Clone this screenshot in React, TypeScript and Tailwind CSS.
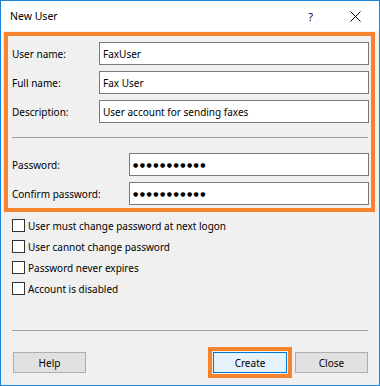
import React from 'react';

const fields = [
  { label: 'User name:', value: 'FaxUser' },
  { label: 'Full name:', value: 'Fax User' },
  { label: 'Description:', value: 'User account for sending faxes' },
];

const passwords = ['Password:', 'Confirm password:'];

const options = [
  'User must change password at next logon',
  'User cannot change password',
  'Password never expires',
  'Account is disabled',
];

export default function App() {
  return (
    <div className="w-[380px] h-[386px] border border-[#1883d7] bg-[#f0f0f0] flex flex-col font-['Noto_Sans',sans-serif] text-[10px] leading-none text-black">
      {/* Title bar */}
      <div className="h-[30px] bg-white flex items-center pl-[9px]">
        <span className="text-[10.5px]">New User</span>
        <span className="ml-auto text-[11px] mr-[37px]">?</span>
        <svg width="11" height="11" viewBox="0 0 11 11" className="mr-[18px]">
          <path d="M0.5 0.5 L10.5 10.5 M10.5 0.5 L0.5 10.5" stroke="#000" strokeWidth="1" fill="none" />
        </svg>
      </div>

      {/* Body */}
      <div className="flex-1 flex flex-col pl-[3px] pr-[4px] pt-[1px]">
        {/* Highlighted fields */}
        <div className="border-4 border-[#f7842c] pt-[6px] pb-[3px] pl-[4px] pr-[2px] flex flex-col">
          <div className="flex flex-col gap-[6px]">
            {fields.map((f) => (
              <div key={f.label} className="flex items-center">
                <span className="w-[87px]">{f.label}</span>
                <div className="flex-1 h-[23px] bg-white border border-[#7a7a7a] flex items-center pl-[3px]">
                  {f.value}
                </div>
              </div>
            ))}
          </div>

          <div className="mt-[14px] mr-[1px] border-t border-[#a0a0a0]" />

          <div className="mt-[15px] flex flex-col gap-[6px]">
            {passwords.map((p) => (
              <div key={p} className="flex items-center">
                <span className="w-[117px]">{p}</span>
                <div className="flex-1 h-[23px] bg-white border border-[#7a7a7a] flex items-center pl-[3px]">
                  <span className="font-['DejaVu_Sans',sans-serif] text-[6px] tracking-[1.5px]">●●●●●●●●●●●</span>
                </div>
              </div>
            ))}
          </div>
        </div>

        {/* Options */}
        <div className="mt-[7px] ml-[8px] flex flex-col gap-[8px]">
          {options.map((o) => (
            <label key={o} className="flex items-center h-[13px]">
              <span className="w-[13px] h-[13px] bg-white border border-[#333333]" />
              <span className="ml-[3px]">{o}</span>
            </label>
          ))}
        </div>

        <div className="mt-auto ml-[8px] mr-[7px] border-t border-[#a0a0a0]" />

        {/* Buttons */}
        <div className="mt-[16px] mb-[7px] flex items-center pl-[9px] pr-[7px]">
          <button className="w-[73px] h-[21px] bg-[#e1e1e1] border border-[#adadad]">Help</button>
          <div className="ml-auto flex items-center">
            <div className="border-4 border-[#f7842c] p-[1px]">
              <button className="w-[74px] h-[21px] bg-[#e5f1fb] border border-[#0078d7]">Create</button>
            </div>
            <button className="ml-[3px] w-[73px] h-[21px] bg-[#e1e1e1] border border-[#adadad]">Close</button>
          </div>
        </div>
      </div>
    </div>
  );
}
